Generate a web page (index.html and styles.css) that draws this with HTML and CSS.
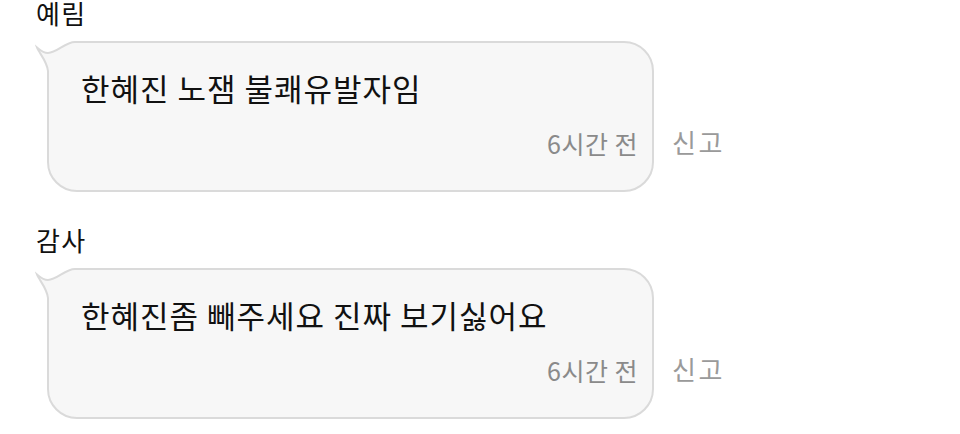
FILE: index.html
```html
<!DOCTYPE html>
<html>
<head>
    <title>댓글</title>
    <link rel="stylesheet" href="styles.css">
</head>
<body>
    <div class="comments">
        <!-- 댓글 1 -->
        <div class="comment">
            <div class="author">예림</div>
            <div class="row">
                <div class="bubble">
                    <svg class="tail" width="44" height="36" viewBox="0 0 44 36">
                        <rect x="10" y="0" width="34" height="34" fill="#fff"/>
                        <path d="M44 3 L40 3 C30 3, 22 14, 13 14 C8 14, 5 11, 2 8.5 C4 14, 12 22, 13 32 L13 34 L44 34 Z" fill="#f7f7f7"/>
                        <path d="M44 3 L40 3 C30 3, 22 14, 13 14 C8 14, 5 11, 2 8.5 C4 14, 12 22, 13 32 L13 36" fill="none" stroke="#dadada" stroke-width="2"/>
                    </svg>
                    <p class="text">한혜진 노잼 불쾌유발자임</p>
                    <div class="time">6시간 전</div>
                </div>
                <span class="report">신고</span>
            </div>
        </div>

        <!-- 댓글 2 -->
        <div class="comment">
            <div class="author">감사</div>
            <div class="row">
                <div class="bubble">
                    <svg class="tail" width="44" height="36" viewBox="0 0 44 36">
                        <rect x="10" y="0" width="34" height="34" fill="#fff"/>
                        <path d="M44 3 L40 3 C30 3, 22 14, 13 14 C8 14, 5 11, 2 8.5 C4 14, 12 22, 13 32 L13 34 L44 34 Z" fill="#f7f7f7"/>
                        <path d="M44 3 L40 3 C30 3, 22 14, 13 14 C8 14, 5 11, 2 8.5 C4 14, 12 22, 13 32 L13 36" fill="none" stroke="#dadada" stroke-width="2"/>
                    </svg>
                    <p class="text">한혜진좀 빼주세요 진짜 보기싫어요</p>
                    <div class="time">6시간 전</div>
                </div>
                <span class="report">신고</span>
            </div>
        </div>
    </div>
</body>
</html>
```

FILE: styles.css
```css
body {
    margin: 0;
    font-family: 'Noto Sans CJK KR', 'Noto Sans', sans-serif;
    background-color: #fff;
    color: #111;
}

.comments {
    padding-left: 36px;
}

.comment {
    height: 228px;
}

.author {
    font-size: 26px;
    letter-spacing: 1.4px;
    line-height: 28px;
    margin-top: -1px;
    height: 42px;
}

.row {
    display: flex;
    align-items: flex-end;
}

/* Speech bubble */
.bubble {
    position: relative;
    box-sizing: border-box;
    margin-left: 11px;
    width: 607px;
    border: 2px solid #dadada;
    border-radius: 0 30px 30px 30px;
    background: #f7f7f7;
    padding: 27px 14px 32px 32px;
}

.tail {
    position: absolute;
    left: -14px;
    top: -4px;
}

.text {
    position: relative;
    margin: 0;
    font-size: 31px;
    letter-spacing: 1px;
    line-height: 36px;
}

.time {
    margin-top: 22px;
    text-align: right;
    font-size: 25px;
    letter-spacing: 0.5px;
    line-height: 30px;
    color: #8a8a8a;
}

.report {
    margin-left: 18px;
    margin-bottom: 35px;
    font-size: 26px;
    letter-spacing: 2.5px;
    line-height: 30px;
    color: #9a9a9a;
}
```
